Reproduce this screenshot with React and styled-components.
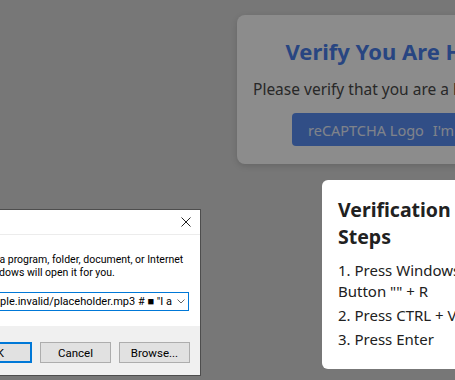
import React from "react";
import styled, { createGlobalStyle } from "styled-components";

const GlobalStyle = createGlobalStyle`
  html, body { margin: 0; padding: 0; }
  body {
    width: 455px;
    height: 380px;
    overflow: hidden;
    background: #d9d9d9;
    font-family: "Noto Sans", "Open Sans", Arial, sans-serif;
  }
`;

const Page = styled.div`
  height: 380px;
  display: flex;
  align-items: flex-start;
  padding: 15px 0 0 237px;
  box-sizing: border-box;
`;

const CaptchaCard = styled.div`
  flex: 0 0 337px;
  min-width: 0;
  background: #ffffff;
  border-radius: 8px;
  padding: 20px 16px 16px;
  box-sizing: border-box;
  height: 149px;
  text-align: center;
  box-shadow: 0 2px 6px rgba(0, 0, 0, 0.15);
`;

const Title = styled.h1`
  margin: 0;
  font-size: 22px;
  font-weight: 700;
  color: #4a7fec;
  white-space: nowrap;
  line-height: 32px;
`;

const Subtitle = styled.p`
  margin: 12px 0 0;
  font-size: 15.5px;
  color: #4a4a4a;
  white-space: nowrap;
  line-height: 20px;
  text-align: left;
`;

const VerifyButton = styled.div`
  margin: 14px 39px 0;
  height: 33px;
  border-radius: 4px;
  background: #5a8ff5;
  color: #e8eefc;
  font-size: 14.5px;
  display: flex;
  align-items: center;
  gap: 9px;
  padding: 0 16px;
  box-sizing: border-box;
  white-space: nowrap;
  overflow: hidden;
`;

const Overlay = styled.div`
  position: fixed;
  inset: 0;
  background: rgba(0, 0, 0, 0.45);
  display: flex;
  align-items: flex-start;
  padding-top: 180px;
`;

const RunDialog = styled.div`
  flex: 0 0 334px;
  min-width: 0;
  margin: 29px 0 0 -133px;
  height: 167px;
  background: #ffffff;
  border: 1px solid #4d4d4d;
  box-sizing: border-box;
  display: flex;
  flex-direction: column;
  font-family: Roboto, "Noto Sans", Arial, sans-serif;
  font-size: 10.5px;
  color: #000;
`;

const TitleBar = styled.div`
  height: 24px;
  display: flex;
  align-items: center;
  justify-content: space-between;
  padding: 0 8px;
  border-bottom: 1px solid #ececec;
`;

const CloseIcon = styled.svg`
  width: 10px;
  height: 10px;
  margin-right: 1px;
`;

const DialogBody = styled.div`
  flex: 1;
  min-width: 0;
  padding: 18px 11px 0 12px;
  display: flex;
  flex-direction: column;
`;

const PromptRow = styled.div`
  display: flex;
  gap: 4px;
  margin-right: -10px;
`;

const RunIcon = styled.div`
  flex: 0 0 32px;
  height: 32px;
`;

const PromptText = styled.div`
  flex: 1;
  min-width: 0;
  line-height: 13px;
`;

const OpenRow = styled.div`
  margin-top: 7px;
  display: flex;
  align-items: center;
  gap: 10px;
`;

const OpenLabel = styled.span`
  flex: 0 0 auto;
`;

const OpenField = styled.div`
  flex: 1;
  min-width: 0;
  height: 19px;
  border: 1px solid #0078d7;
  box-sizing: border-box;
  display: flex;
  align-items: center;
  overflow: hidden;
  background: #fff;
  font-size: 11px;
`;

const FieldText = styled.div`
  flex: 1;
  display: flex;
  justify-content: flex-end;
  white-space: nowrap;
  overflow: hidden;
  padding-right: 2px;
`;

const Chevron = styled.svg`
  flex: 0 0 14px;
  width: 8px;
  height: 5px;
`;

const Footer = styled.div`
  height: 49px;
  background: #f0f0f0;
  display: flex;
  justify-content: flex-end;
  align-items: flex-start;
  gap: 8px;
  padding: 16px 10px 0 0;
  box-sizing: border-box;
`;

const DialogButton = styled.div`
  width: 71px;
  height: 21px;
  box-sizing: border-box;
  background: #e1e1e1;
  border: ${(p) => (p.$primary ? "2px solid #0078d7" : "1px solid #adadad")};
  display: flex;
  align-items: center;
  justify-content: center;
  font-size: 11.5px;
`;

const StepsCard = styled.div`
  flex: 0 0 170px;
  margin-left: 121px;
  height: 189px;
  background: #ffffff;
  border-radius: 6px;
  padding: 16px 16px;
  box-sizing: border-box;
  font-family: "Noto Sans", "Open Sans", Arial, sans-serif;
  color: #212121;
`;

const StepsTitle = styled.h2`
  margin: 0;
  font-size: 19.5px;
  font-weight: 700;
  line-height: 27px;
  width: 120px;
`;

const StepsList = styled.div`
  margin-top: 10px;
  display: flex;
  flex-direction: column;
  gap: 3px;
  font-size: 15px;
  line-height: 21px;
  width: 130px;
`;

export default function App() {
  return (
    <>
      <GlobalStyle />
      <Page>
        <CaptchaCard>
          <Title>Verify You Are Human</Title>
          <Subtitle>Please verify that you are a human to continue.</Subtitle>
          <VerifyButton>
            <span>reCAPTCHA Logo</span>
            <span>I'm not a robot</span>
          </VerifyButton>
        </CaptchaCard>
      </Page>
      <Overlay>
        <RunDialog>
          <TitleBar>
            <span>Run</span>
            <CloseIcon viewBox="0 0 10 10">
              <path d="M0.5 0.5 L9.5 9.5 M9.5 0.5 L0.5 9.5" stroke="#222" strokeWidth="1" />
            </CloseIcon>
          </TitleBar>
          <DialogBody>
            <PromptRow>
              <RunIcon />
              <PromptText>
                Type the name of a program, folder, document, or Internet resource, and Windows will open it for you.
              </PromptText>
            </PromptRow>
            <OpenRow>
              <OpenLabel>Open:</OpenLabel>
              <OpenField>
                <FieldText>example.invalid/placeholder.mp3 # ■ "I a</FieldText>
                <Chevron viewBox="0 0 8 5">
                  <path d="M0.5 0.5 L4 4 L7.5 0.5" fill="none" stroke="#666" strokeWidth="1" />
                </Chevron>
              </OpenField>
            </OpenRow>
          </DialogBody>
          <Footer>
            <DialogButton $primary>OK</DialogButton>
            <DialogButton>Cancel</DialogButton>
            <DialogButton>Browse...</DialogButton>
          </Footer>
        </RunDialog>
        <StepsCard>
          <StepsTitle>Verification Steps</StepsTitle>
          <StepsList>
            <span>1. Press Windows Button "" + R</span>
            <span>2. Press CTRL + V</span>
            <span>3. Press Enter</span>
          </StepsList>
        </StepsCard>
      </Overlay>
    </>
  );
}
